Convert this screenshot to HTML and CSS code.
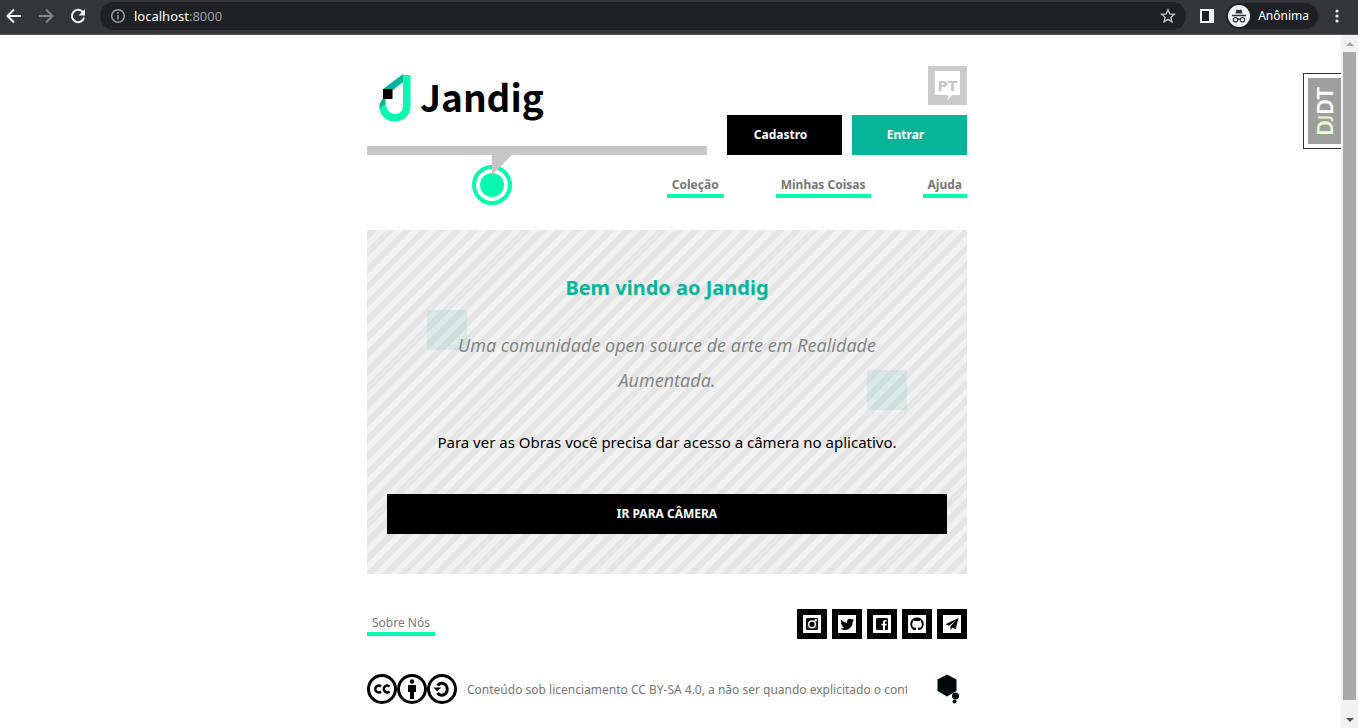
FILE: index.html
```
<!DOCTYPE html>
<html lang="pt">
<head>
<meta charset="utf-8">
<title>Jandig</title>
<link rel="stylesheet" href="styles.css">
</head>
<body>
<div class="browser-bar">
  <button class="tool" type="button" aria-label="Voltar"><svg width="16" height="16" viewBox="0 0 16 16" fill="none" stroke="#f1f3f4" stroke-width="2"><path d="M15 8H2M8 1.500L1.500 8L8 14.500"/></svg></button>
  <button class="tool" type="button" aria-label="Avançar"><svg width="16" height="16" viewBox="0 0 16 16" fill="none" stroke="#85868a" stroke-width="2"><path d="M1 8h13M8 1.500L14.500 8L8 14.500"/></svg></button>
  <button class="tool" type="button" aria-label="Recarregar"><svg width="16" height="16" viewBox="0 0 16 16"><path d="M13 4.200A6.200 6.200 0 1 0 14.100 9.500" fill="none" stroke="#f1f3f4" stroke-width="2"/><path d="M15 1v6.500H8.500z" fill="#f1f3f4"/></svg></button>
  <div class="address">
    <svg width="16" height="16" viewBox="0 0 16 16" fill="none" stroke="#9aa0a6" stroke-width="1.500"><circle cx="8" cy="8" r="6.300"/><path d="M8 7v4.500M8 4v1.700"/></svg>
    <span class="url">localhost<span class="port">:8000</span></span>
    <svg width="16" height="16" viewBox="0 0 16 16" fill="none" stroke="#c4c7c9" stroke-width="1.400"><path d="M8 1.800l1.800 4.100 4.500.4-3.400 3 1 4.400L8 11.400l-3.900 2.300 1-4.400-3.400-3 4.500-.4z"/></svg>
  </div>
  <button class="tool panel-button" type="button" aria-label="Painel lateral"><svg width="14" height="14" viewBox="0 0 14 14"><path d="M0 0h14v14H0z" fill="#f1f3f4"/><path d="M2 2h7v10H2z" fill="#202124"/></svg></button>
  <button class="profile" type="button">
    <svg width="22" height="22" viewBox="0 0 22 22"><circle cx="11" cy="11" r="11" fill="#f1f3f4"/><path d="M7.500 8.500l1-4 2.500.5 2.500-.5 1 4z" fill="#303134"/><path d="M4 10.500h14M9.500 14.500q1.500-1 3 0" stroke="#303134" stroke-width="1.300" fill="none"/><circle cx="7.500" cy="14.700" r="2.200" fill="none" stroke="#303134" stroke-width="1.200"/><circle cx="14.500" cy="14.700" r="2.200" fill="none" stroke="#303134" stroke-width="1.200"/></svg>
    <span>Anônima</span>
  </button>
  <button class="tool" type="button" aria-label="Menu"><svg width="16" height="16" viewBox="0 0 16 16" fill="#f1f3f4"><circle cx="8" cy="3" r="1.600"/><circle cx="8" cy="8" r="1.600"/><circle cx="8" cy="13" r="1.600"/></svg></button>
</div>
<div class="viewport">
  <div class="page">
    <header class="header">
      <a class="logo" href="#">
        <svg width="32" height="48" viewBox="0 0 32 48"><path d="M24 1h7.500v31c0 9-6.500 15.500-15.500 15.500C7 47.500.500 41.500.500 33l6-4c1 7 4 11 9.500 11s8-3.500 8-9z" fill="#06f9ae"/><path d="M24 0v8L6.500 22v8L.500 35v-5L4 24v-9z" fill="#06b497"/><path d="M4 15h9.500v10H4z"/></svg>
        <span>Jandig</span>
      </a>
      <button class="language" type="button">
        <svg width="25" height="29" viewBox="0 0 25 29"><path d="M0 0h25v24h-8l-4 5v-5H0z" fill="#fff"/></svg>
        <span>PT</span>
      </button>
      <div class="actions">
        <a class="button" href="#">Cadastro</a>
        <a class="button button-primary" href="#">Entrar</a>
      </div>
      <div class="rule"></div>
      <svg class="marker" width="40" height="50" viewBox="0 0 40 50"><circle cx="20" cy="30" r="18" fill="none" stroke="#06f9ae" stroke-width="4"/><circle cx="20" cy="30" r="12" fill="#06f9ae"/><path d="M20 0h20L20 20z" fill="#c6c6c6"/></svg>
      <nav class="nav">
        <a class="link" href="#">Coleção</a>
        <a class="link" href="#">Minhas Coisas</a>
        <a class="link" href="#">Ajuda</a>
      </nav>
    </header>
    <main class="welcome">
      <h1>Bem vindo ao Jandig</h1>
      <p class="tagline">Uma comunidade open source de arte em Realidade Aumentada.</p>
      <p class="notice">Para ver as Obras você precisa dar acesso a câmera no aplicativo.</p>
      <a class="button" href="#">IR PARA CÂMERA</a>
    </main>
    <footer class="footer">
      <div class="footer-row">
        <a class="link link-light" href="#">Sobre Nós</a>
        <div class="social">
          <a href="#" aria-label="Instagram"><svg width="18" height="18" viewBox="0 0 18 18"><rect x="3" y="3" width="12" height="12" rx="1.500"/><path d="M4.300 8h1.200a3.600 3.600 0 1 0 7 0h1.200v5.700H4.300z" fill="#fff" opacity=".25"/><circle cx="9" cy="9.300" r="3.300" fill="none" stroke="#fff" stroke-width="1.400"/><path d="M11.500 4.200h2.300v2.200h-2.300z" fill="#fff"/></svg></a>
          <a href="#" aria-label="Twitter"><svg width="18" height="18" viewBox="0 0 18 18"><path d="M3 4.500c1.700 2 3.500 3 6 3.200C8.700 5.300 10 3.700 12 3.700c.8 0 1.500.4 2 .9l1.700-.7-.9 1.500 1.200-.3-1.300 1.500C14.700 11.500 11.500 15 7.200 15A7.700 7.700 0 0 1 2.500 13.500c1.500.1 2.700-.3 3.800-1.200-1.400-.2-2.200-.9-2.500-2h1.100C3.500 9.700 2.800 8.700 2.800 7.200l1.200.4C2.900 6.600 2.500 5.800 3 4.500z"/></svg></a>
          <a href="#" aria-label="Facebook"><svg width="18" height="18" viewBox="0 0 18 18"><path d="M4.500 3h9A1.500 1.500 0 0 1 15 4.500v9a1.500 1.500 0 0 1-1.500 1.500H12v-4.500h1.700V8.700H12V7.500c0-.7.300-1 1-1h.8V5h-1.500c-1.500 0-2.300.8-2.300 2.300v1.400H8.500v1.800H10V15H4.500A1.500 1.500 0 0 1 3 13.500v-9A1.500 1.500 0 0 1 4.500 3z"/></svg></a>
          <a href="#" aria-label="GitHub"><svg width="18" height="18" viewBox="0 0 18 18"><path d="M7.300 15v-2.500M10.700 15v-2.500M7.300 14.200c-1.500.3-2.100-.4-2.800-1.400" fill="none" stroke="#000" stroke-width="1.300"/><path fill-rule="evenodd" d="M9 2.500a6.500 6.500 0 0 0-2.200 12.700V13c-1.600-.5-2.600-1.500-2.600-3.600 0-1 .2-1.700.8-2.300V5.200l2 .8h4l2-.8v1.900c.6.600.8 1.300.8 2.300 0 2.100-1 3.100-2.600 3.600v2.200A6.500 6.500 0 0 0 9 2.500z"/></svg></a>
          <a href="#" aria-label="Telegram"><svg width="18" height="18" viewBox="0 0 18 18"><path d="M15.500 3L2.500 9.200l3.500 1.500L13 5.500 7.500 11.300V15l2-2.500 3.200 1.700z"/></svg></a>
        </div>
      </div>
      <div class="footer-row">
        <svg class="license-icon" width="90" height="30" viewBox="0 0 90 30" fill="none" stroke="#000" stroke-width="3"><circle cx="15" cy="15" r="13.500"/><circle cx="45" cy="15" r="13.500"/><circle cx="75" cy="15" r="13.500"/><path d="M14 12.500a3.400 3.400 0 1 0 0 5M22.500 12.500a3.400 3.400 0 1 0 0 5" stroke-width="2.500"/><circle cx="45" cy="7.500" r="2.200" fill="#000" stroke="none"/><path d="M41 11h8v7h-2v7h-4v-7h-2z" fill="#000" stroke="none"/><path d="M70.500 11.500A5.500 6 0 1 1 70.500 19"/><path d="M66.500 13.500h7.500l-3.700 4z" fill="#000" stroke="none"/></svg>
        <span class="license">Conteúdo sob licenciamento CC BY-SA 4.0, a não ser quando explicitado o contrário.</span>
        <svg class="partner" width="24" height="30" viewBox="0 0 24 30" fill="#020a0b"><path d="M10 .500l9.500 5v11.500L10 22.500.500 17V5.500z"/><circle cx="18.500" cy="22" r="3.500"/><circle cx="17.500" cy="27.500" r="2"/></svg>
      </div>
    </footer>
  </div>
  <a class="debug" href="#"><span class="debug-label"><span class="debug-brand">D<small>J</small></span>DT</span></a>
  <div class="scrollbar">
    <svg width="17" height="17" viewBox="0 0 17 17"><path d="M5 11h8L9 7z" fill="#a3a3a3"/></svg>
    <div class="thumb"></div>
    <svg width="17" height="17" viewBox="0 0 17 17"><path d="M5 7h8l-4 4z" fill="#505050"/></svg>
  </div>
</div>
</body>
</html>
```
FILE: styles.css
```
* { box-sizing: border-box; }
body {
  margin: 0;
  height: 100vh;
  display: flex;
  flex-direction: column;
  overflow: hidden;
  background: #fff;
  color: #000;
  font-family: "Noto Sans", "Open Sans", sans-serif;
  font-size: 12px;
}
a { color: inherit; text-decoration: none; }
svg { display: block; flex: none; }
button { border: 0; padding: 0; background: none; font: inherit; color: inherit; }

.browser-bar {
  display: flex;
  align-items: center;
  flex: none;
  height: 35px;
  padding: 0 13px 3px 6px;
  background: #35363a;
  border-bottom: 1px solid #5b585c;
}
.tool { margin-right: 16px; }
.tool:last-child { margin: 0; }
.address {
  display: flex;
  align-items: center;
  flex: 1;
  gap: 8px;
  height: 28px;
  margin: 0 14px 0 -2px;
  padding: 0 10px;
  border-radius: 14px;
  background: #202124;
  color: #fff;
  font-size: 13px;
}
.url { flex: 1; }
.port { color: #9aa0a6; }
.panel-button { margin-right: 12px; }
.profile {
  display: flex;
  align-items: center;
  gap: 8px;
  height: 26px;
  margin-right: 11px;
  padding: 0 9px 0 2px;
  border-radius: 13px;
  background: #202124;
  color: #fff;
}

.viewport {
  position: relative;
  display: flex;
  flex: 1;
  min-height: 0;
}
.page {
  flex: 1;
  min-width: 0;
  padding: 31px 7px 0 0;
}
.header, .welcome, .footer {
  max-width: 600px;
  margin: 0 auto;
}

.header {
  position: relative;
  display: grid;
  grid-template-columns: 1fr auto;
  column-gap: 20px;
}
.logo {
  grid-row: 1 / 3;
  display: flex;
  align-items: flex-start;
  gap: 9px;
  padding: 8px 0 0 12px;
  font-family: "Noto Sans CJK SC", sans-serif;
  font-size: 37px;
  font-weight: 700;
  line-height: 44px;
}
.language {
  display: grid;
  place-items: center;
  justify-self: end;
  width: 39px;
  height: 39px;
  background: #cacaca;
  color: #c6c6c6;
  font-family: "DejaVu Sans", sans-serif;
  font-size: 14px;
  font-weight: 700;
}
.language svg, .language span { grid-area: 1 / 1; }
.actions {
  display: flex;
  gap: 10px;
  padding-top: 10px;
}
.button {
  display: block;
  background: #000;
  color: #fff;
  line-height: 40px;
  font-weight: 700;
  text-align: center;
}
.actions .button {
  width: 115px;
  padding-right: 8px;
}
.button-primary { background: #06b497; }
.rule {
  height: 9px;
  margin-top: -9px;
  background: #c6c6c6;
}
.marker {
  position: absolute;
  left: 105px;
  top: 89px;
}
.nav {
  grid-column: 1 / 3;
  display: flex;
  justify-content: flex-end;
  gap: 52px;
  margin-top: 20px;
}
.link {
  padding: 0 5px;
  border-bottom: 4px solid #06f9ae;
  color: #767676;
  font-weight: 700;
  line-height: 19px;
}
.link-light { font-weight: 400; }

.welcome {
  position: relative;
  margin-top: 32px;
  padding: 40px 20px;
  background: repeating-linear-gradient(-45deg, #e5e5e5 0, #e5e5e5 6px, #f0f0f0 6px, #f0f0f0 12px);
  text-align: center;
}
.welcome::before, .welcome::after {
  content: "";
  position: absolute;
  width: 40px;
  height: 40px;
  background: #06b497;
  opacity: 0.1;
}
.welcome::before { left: 60px; top: 80px; }
.welcome::after { right: 60px; top: 140px; }
h1 {
  margin: 0;
  color: #06b497;
  font-size: 20px;
  line-height: 36px;
}
.tagline {
  margin: 22px 60px 0;
  color: #878787;
  font-size: 18px;
  font-style: italic;
  line-height: 35px;
}
.notice {
  margin: 32px 0 40px;
  font-size: 15px;
  line-height: 24px;
}

.footer { margin-top: 35px; }
.footer-row {
  display: flex;
  align-items: center;
  height: 30px;
  margin-bottom: 35px;
}
.social {
  display: flex;
  gap: 5px;
  margin-left: auto;
}
.social a { background: #fff; border: 6px solid #000; }
.license {
  flex: 1;
  min-width: 0;
  margin: 0 30px 0 10px;
  overflow: hidden;
  white-space: nowrap;
  color: #767676;
}
.partner { margin-right: 6px; }

.debug {
  position: absolute;
  right: 17px;
  top: 38px;
  padding: 4px 0 4px 4px;
  border: 1px solid #333;
  border-right: 0;
}
.debug-label {
  display: block;
  width: 33px;
  height: 66px;
  background: #9e9e9e;
  color: #fff;
  font-size: 22px;
  font-weight: 600;
  line-height: 33px;
  text-align: center;
  writing-mode: vertical-rl;
  transform: rotate(180deg);
}
.debug-brand { color: #e4ffcd; }
.debug-brand small { font-size: 16px; }
.scrollbar {
  display: flex;
  flex-direction: column;
  width: 17px;
  background: #f1f1f1;
}
.thumb {
  flex: 1;
  margin: 0 2px 11px;
  background: #a8a8a8;
}
```
